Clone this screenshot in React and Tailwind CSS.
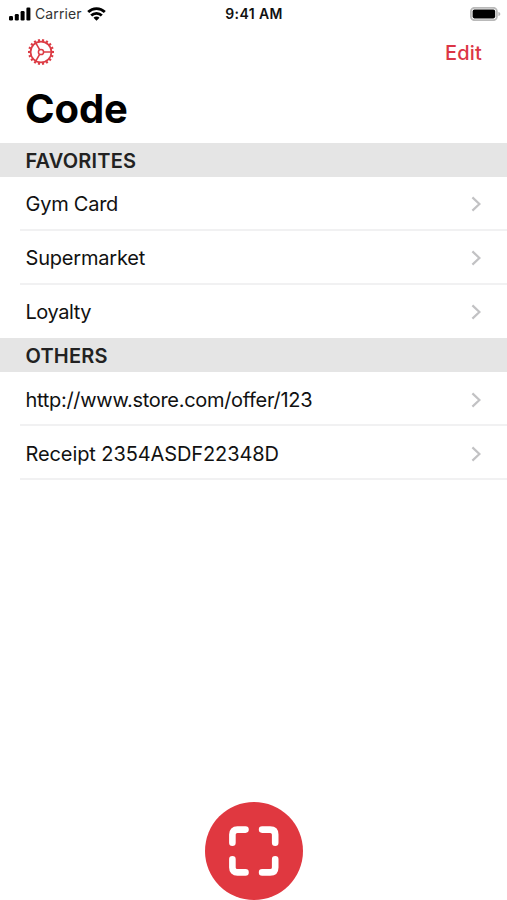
const SECTIONS = [
  {
    title: 'FAVORITES',
    titleClass: 'tracking-[0.18px]',
    items: [
      { name: 'Gym Card', className: 'tracking-[-0.25px]' },
      { name: 'Supermarket', className: 'tracking-[-0.2px]' },
      { name: 'Loyalty', className: 'tracking-[-0.45px]' },
    ],
  },
  {
    title: 'OTHERS',
    titleClass: 'tracking-[0.18px]',
    items: [
      { name: 'http://www.store.com/offer/123', className: 'tracking-[-0.3px]' },
      { name: 'Receipt 2354ASDF22348D', className: 'tracking-[-0.1px]' },
    ],
  },
]

const TEETH = Array.from({ length: 18 }, (_, i) => i * 20)

function SignalIcon() {
  return (
    <svg width="22" height="14" viewBox="0 0 22 14" fill="#000">
      <rect x="0" y="9" width="4" height="4.4" rx="1.2" />
      <rect x="5.8" y="7" width="4" height="6.4" rx="1.2" />
      <rect x="11.6" y="4" width="4" height="9.4" rx="1.2" />
      <rect x="17.4" y="0.6" width="4" height="12.8" rx="1.2" />
    </svg>
  )
}

function WifiIcon() {
  return (
    <svg width="19" height="14" viewBox="0 0 19 14" fill="none" stroke="#000" strokeWidth="2.8">
      <path d="M1.2 5.1a11.8 11.8 0 0 1 16.6 0" />
      <path d="M4.2 8.6a7.5 7.5 0 0 1 10.6 0" />
      <path d="M9.5 13.7 6.5 10.7a4.2 4.2 0 0 1 6 0z" fill="#000" stroke="none" />
    </svg>
  )
}

function BatteryIcon() {
  return (
    <svg width="31" height="14" viewBox="0 0 31 14">
      <rect x="0.9" y="0.8" width="26" height="12.4" rx="3.6" fill="#fff" stroke="#b9b9b9" strokeWidth="1.8" />
      <rect x="2.6" y="2.6" width="22.6" height="8.8" rx="1.8" fill="#000" />
      <path d="M28.4 4.9c1.3.4 1.9 1.2 1.9 2.1s-.6 1.7-1.9 2.1z" fill="#b5b5b5" />
    </svg>
  )
}

function GearIcon() {
  return (
    <svg width="28" height="28" viewBox="-14 -14 28 28" fill="none" stroke="#dc3c45">
      <circle r="10.4" strokeWidth="1.7" />
      <circle r="2.6" strokeWidth="1.5" />
      <path d="M2.7 0H10.2M-1.4-2.4-5.1-8.8M-1.4 2.4-5.1 8.8" strokeWidth="1.6" />
      {TEETH.map((angle) => (
        <path key={angle} d="M10.6 0H13" strokeWidth="2.1" transform={`rotate(${angle})`} />
      ))}
    </svg>
  )
}

function Chevron() {
  return (
    <svg width="11" height="16" viewBox="0 0 11 16" fill="none" stroke="#c2c2c4" strokeWidth="2.2">
      <path d="M1.4 1.4 8.4 8l-7 6.6" />
    </svg>
  )
}

function ScanIcon() {
  return (
    <svg width="50" height="50" viewBox="0 0 50 50" fill="none" stroke="#fff" strokeWidth="6.6" strokeLinecap="round">
      <path d="M3.4 16.7V8.6q0-5 5-5h8.1" />
      <path d="M33.1 3.6h8.1q5 0 5 5v8.1" />
      <path d="M46.2 33.3v8.1q0 5-5 5h-8.1" />
      <path d="M16.5 46.4H8.4q-5 0-5-5v-8.1" />
    </svg>
  )
}

function StatusBar() {
  return (
    <div className="grid h-[27px] grid-cols-3 items-center pl-[9px] pr-[6px]">
      <div className="flex items-center">
        <SignalIcon />
        <span className="ml-1 mr-[5px] text-[14px] tracking-[0.1px] text-[#333]">Carrier</span>
        <WifiIcon />
      </div>
      <span className="pr-[2px] text-center text-[14px] font-semibold tracking-[0.4px]">9:41 AM</span>
      <div className="flex justify-end">
        <BatteryIcon />
      </div>
    </div>
  )
}

function Row({ item, last }) {
  return (
    <li className="pl-[20px]">
      <div
        className={`flex h-[53.8px] items-center justify-between border-b-2 pl-[5.5px] pr-[25px] pt-[3px] ${last ? 'border-transparent' : 'border-[#f1f1f2]'}`}
      >
        <span className={`text-[20px] ${item.className}`}>{item.name}</span>
        <Chevron />
      </div>
    </li>
  )
}

function Section({ section, lastSection }) {
  return (
    <section>
      <h2 className={`flex h-[34px] items-center bg-[#e5e5e5] pl-[25.5px] pt-px text-[20px] font-semibold text-[#222] ${section.titleClass}`}>
        {section.title}
      </h2>
      <ul>
        {section.items.map((item, i) => (
          <Row key={item.name} item={item} last={!lastSection && i === section.items.length - 1} />
        ))}
      </ul>
    </section>
  )
}

export default function App() {
  return (
    <div className="flex h-[900px] w-[507px] flex-col overflow-hidden bg-white font-['Inter',sans-serif] text-[#111]">
      <StatusBar />
      <header>
        <div className="flex h-[50px] items-center justify-between pl-[27px] pr-[25px]">
          <button aria-label="Settings">
            <GearIcon />
          </button>
          <button className="pt-[2px] text-[20px] font-medium tracking-[0.2px] text-[#dc3545]">Edit</button>
        </div>
        <h1 className="flex h-[66px] items-center pb-[3px] pl-[25px] text-[40px] font-bold tracking-[-0.1px] text-black">
          Code
        </h1>
      </header>
      <main className="flex-1">
        {SECTIONS.map((section, i) => (
          <Section key={section.title} section={section} lastSection={i === SECTIONS.length - 1} />
        ))}
      </main>
      <footer className="flex justify-center">
        <button aria-label="Scan" className="flex size-[98px] items-center justify-center rounded-full bg-[#e03840]">
          <ScanIcon />
        </button>
      </footer>
    </div>
  )
}
